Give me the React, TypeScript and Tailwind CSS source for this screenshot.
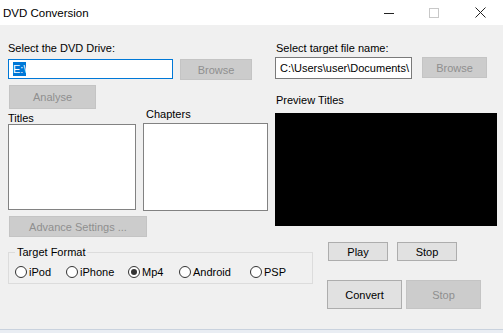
import React from 'react';

const font = { fontFamily: '"Liberation Sans", Arial, sans-serif' };

function Btn({ label, disabled, className }: { label: string; disabled?: boolean; className: string }) {
  return (
    <div
      className={
        'flex items-center justify-center border text-[11px] leading-[12px] ' +
        (disabled ? 'bg-[#cccccc] border-[#c4c4c4] text-[#8f8f8f] ' : 'bg-[#e1e1e1] border-[#adadad] text-black ') +
        className
      }
    >
      {label}
    </div>
  );
}

function Radio({ label, checked, className }: { label: string; checked?: boolean; className: string }) {
  return (
    <div className={'flex items-center h-[12px] ' + className}>
      <div className="w-[12px] h-[12px] rounded-full border border-[#333333] bg-white flex items-center justify-center">
        {checked && <div className="w-[6px] h-[6px] rounded-full bg-[#333333]" />}
      </div>
      <span className="ml-[2px] text-[11px] leading-[12px] text-black">{label}</span>
    </div>
  );
}

export default function App() {
  return (
    <div className="w-[503px] h-[333px] bg-[#f0f0f0] flex flex-col overflow-hidden text-black" style={font}>
      {/* Title bar */}
      <div className="h-[25px] bg-white flex items-center shrink-0">
        <span className="ml-[3px] text-[11.5px] leading-[14px]">DVD Conversion</span>
        <div className="ml-auto flex items-center">
          <svg width="10" height="10" viewBox="0 0 10 10" className="mr-[35px]">
            <line x1="0" y1="5.5" x2="10" y2="5.5" stroke="#222" strokeWidth="1" />
          </svg>
          <svg width="10" height="10" viewBox="0 0 10 10" className="mr-[36px]">
            <rect x="0.5" y="0.5" width="9" height="9" fill="none" stroke="#c8c8c8" strokeWidth="1" />
          </svg>
          <svg width="11" height="11" viewBox="0 0 11 11" className="mr-[17px]">
            <line x1="0.5" y1="0.5" x2="10.5" y2="10.5" stroke="#222" strokeWidth="1" />
            <line x1="10.5" y1="0.5" x2="0.5" y2="10.5" stroke="#222" strokeWidth="1" />
          </svg>
        </div>
      </div>

      {/* Top section */}
      <div className="flex h-[212px] shrink-0">
        {/* Left column */}
        <div className="ml-[8px] w-[267px] flex flex-col">
          <div className="mt-[15px] h-[16px] text-[11px] leading-[16px]">Select the DVD Drive:</div>
          <div className="mt-[3px] flex items-start">
            <div className="w-[165px] h-[20px] border border-[#0078d7] bg-white flex items-center pl-[4px]">
              <span className="bg-[#0078d7] text-white text-[11px] leading-[14px]">E:\</span>
            </div>
            <Btn label="Browse" disabled className="ml-[7px] w-[72px] h-[21px]" />
          </div>
          <Btn label="Analyse" disabled className="mt-[5px] ml-[1px] w-[87px] h-[24px]" />
          <div className="flex items-start">
            <div className="flex flex-col">
              <div className="mt-[4px] h-[11px] text-[11px] leading-[11px]">Titles</div>
              <div className="w-[128px] h-[86px] border border-[#828282] bg-white" />
            </div>
            <div className="ml-[7px] flex flex-col">
              <div className="h-[10px] text-[11px] leading-[10px] ml-[3px]">Chapters</div>
              <div className="mt-[4px] w-[125px] h-[88px] border border-[#828282] bg-white" />
            </div>
          </div>
          <Btn label="Advance Settings ..." disabled className="mt-[5px] ml-[1px] w-[138px] h-[21px]" />
        </div>

        {/* Right column */}
        <div className="w-[222px] flex flex-col">
          <div className="mt-[15px] h-[16px] text-[11px] leading-[16px] ml-[1px]">Select target file name:</div>
          <div className="mt-[1px] flex items-start">
            <div className="w-[137px] h-[22px] border border-[#7a7a7a] bg-white flex items-center pl-[4px] overflow-hidden whitespace-nowrap">
              <span className="text-[11px] leading-[14px]">{'C:\\Users\\user\\Documents\\'}</span>
            </div>
            <Btn label="Browse" disabled className="ml-[10px] w-[65px] h-[21px]" />
          </div>
          <div className="mt-[13px] h-[16px] text-[11px] leading-[16px] ml-[1px]">Preview Titles</div>
          <div className="mt-[5px] w-[222px] h-[113px] bg-black" />
        </div>
      </div>

      {/* Bottom section */}
      <div className="flex flex-1">
        <fieldset className="ml-[8px] mt-[9px] w-[305px] h-[38px] border border-[#dcdcdc] px-0 pt-0 pb-[5px] self-start">
          <legend className="ml-[6px] px-[2px] text-[11px] leading-[12px]">Target Format</legend>
          <div className="flex mt-[8px] ml-[6px]">
            <Radio label="iPod" className="w-[51px]" />
            <Radio label="iPhone" className="w-[62px]" />
            <Radio label="Mp4" checked className="w-[51px]" />
            <Radio label="Android" className="w-[71px]" />
            <Radio label="PSP" className="w-[50px]" />
          </div>
        </fieldset>
        <div className="ml-[14px] flex flex-col">
          <div className="mt-[5px] ml-[1px] flex">
            <Btn label="Play" className="w-[60px] h-[19px]" />
            <Btn label="Stop" className="ml-[9px] w-[60px] h-[19px]" />
          </div>
          <div className="mt-[19px] flex">
            <Btn label="Convert" className="w-[75px] h-[29px]" />
            <Btn label="Stop" disabled className="ml-[4px] w-[75px] h-[29px]" />
          </div>
        </div>
      </div>

      {/* Strip of whatever lies behind the window */}
      <div className="h-[4px] shrink-0 border-t border-[#c9d2de] bg-[#e9edf3]" />
    </div>
  );
}
